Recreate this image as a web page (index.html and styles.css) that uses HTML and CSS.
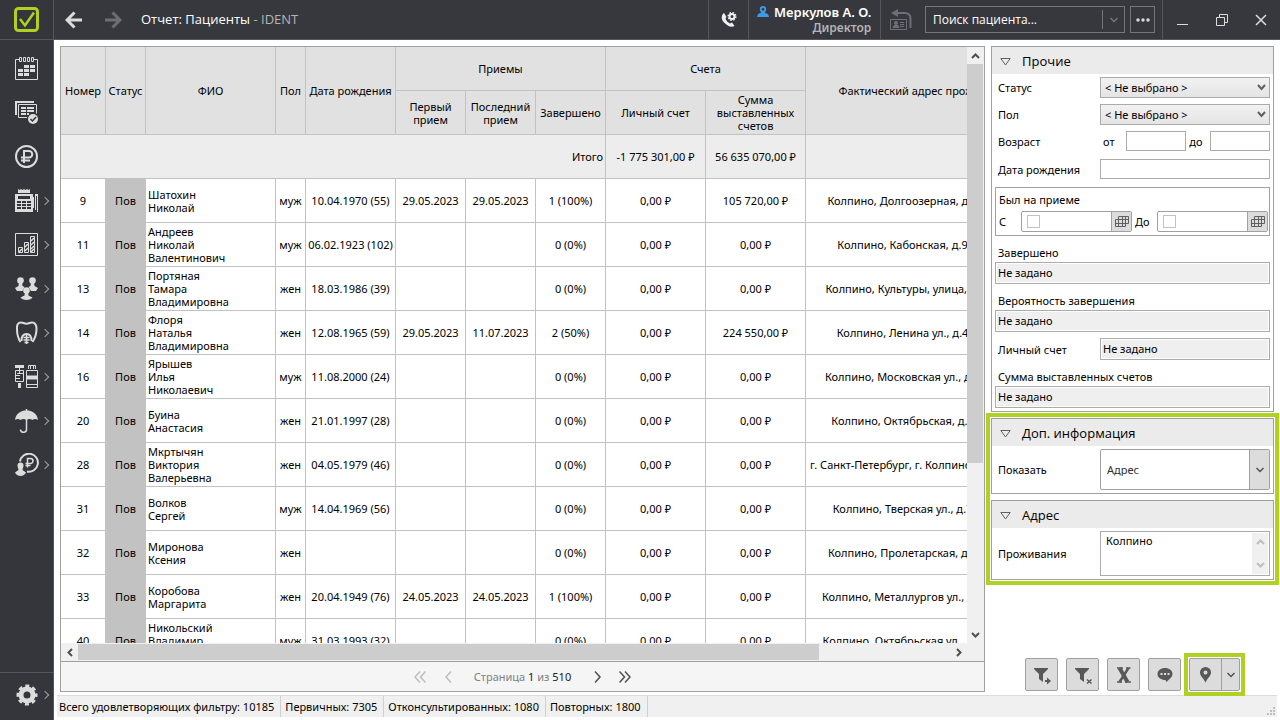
FILE: index.html
```
<!DOCTYPE html>
<html lang="ru">
<head>
    <meta charset="utf-8">
    <title>Отчет: Пациенты - IDENT</title>
    <link rel="stylesheet" href="styles.css">
</head>

<body>
    <div class="sidebar">
        <div class="logo">
            <svg width="26" height="26" viewBox="0 0 26 26" fill="none" stroke="#aed123"><rect x="1.5" y="1.5" width="22" height="22" rx="3" stroke-width="3"/><path d="M6 12l5 6.500L20 5.500" stroke-width="2.500"/></svg>
        </div>
        <nav class="menu">
            <button class="menu-item" aria-label="Расписание">
                <svg width="24" height="24" viewBox="0 0 24 24" fill="#dcdcdc"><path d="M4 2.500H.5V22.500h22V2.500H19" fill="none" stroke="#dcdcdc"/><path d="M4.500.5h2v4h-2zM8.500.5h2v4h-2zM12.500.5h2v4h-2zM16.500.5h2v4h-2z" fill="none" stroke="#dcdcdc"/><path d="M9 8h5v3H9zM15 8h5v3h-5zM3 12h5v3H3zM9 12h5v3H9zM15 12h5v3h-5zM3 16h5v3H3zM9 16h5v3H9z"/></svg>
            </button>
            <button class="menu-item" aria-label="Задачи">
                <svg width="24" height="24" viewBox="0 0 24 24" fill="none" stroke="#dcdcdc"><path d="M1 14V1h18" stroke-width="2"/><path d="M12 16.500H3.500v-13h18v9"/><path d="M6 7h5M12 7h7M6 10h5M12 10h7M6 13h5M12 13h2" stroke-width="2"/><circle cx="18" cy="18" r="5" fill="#dcdcdc" stroke="none"/><path d="M15.500 18l2 2 3.500-4" stroke="#34363b" stroke-width="1.500"/></svg>
            </button>
            <button class="menu-item" aria-label="Касса">
                <svg width="24" height="24" viewBox="0 0 24 24" fill="none" stroke="#dcdcdc" stroke-width="2"><circle cx="11.500" cy="11.500" r="10.500"/><path d="M9 18V6h5a3 3 0 0 1 0 6.500H6M6 15.500h9"/></svg>
            </button>
            <button class="menu-item" aria-label="Счета">
                <svg width="24" height="24" viewBox="0 0 24 24" fill="#dcdcdc"><path d="M3 0l1.500 1L6 0l1.500 1L9 0l1.500 1L12 0l1.500 1L15 0v4H3z"/><path fill-rule="evenodd" d="M0 5h18v18H0zM3 7v3h12V7zM2 12v2h4v-2zM7 12v2h4v-2zM12 12v2h4v-2zM2 15v2h4v-2zM7 15v2h4v-2zM12 15v2h4v-2zM2 18v2h4v-2zM7 18v2h4v-2zM12 18v2h4v-2z"/><path d="M18 8h1v11h-1zM20 5h3v18h-1V7h-1v14h-1z"/></svg>
                <span class="arrow"></span>
            </button>
            <button class="menu-item" aria-label="Отчеты">
                <svg width="24" height="24" viewBox="0 0 24 24" fill="none" stroke="#dcdcdc"><path d="M.5.500h22v22H.5zM3.500 14.500h4v5h-4zM9.500 9.500h4v10h-4zM15.500 3.500h4v16h-4z"/><path d="M4 19l3-3M10 14l3-3M10 18l3-3M16 8l3-3M16 12l3-3M16 16l3-3M16 19l3-3" stroke-width="1.500"/></svg>
                <span class="arrow"></span>
            </button>
            <button class="menu-item" aria-label="Персонал">
                <svg width="24" height="24" viewBox="0 0 24 24" fill="#dcdcdc"><circle cx="5.500" cy="3.500" r="3.300"/><circle cx="17.500" cy="3.500" r="3.300"/><circle cx="11.500" cy="13.500" r="3.300"/><path d="M4 5h3l.5 4 2 1-2 4H2L0 11l3.500-2zM16 5h3l.5 4 3.500 2-2 3h-5l-2.500-4 2-1zM10 15h3l.5 3.500 4 2c-1 1.500-3 2.500-6 2.500s-5-1-6-2.500l4-2z"/></svg>
                <span class="arrow"></span>
            </button>
            <button class="menu-item" aria-label="Лечение">
                <svg width="24" height="24" viewBox="0 0 24 24" fill="none" stroke="#dcdcdc"><path d="M5.500 21C3.500 18 2 12 2 8 1.500 4 3 1.500 6 1.500c2 0 3 1.200 5.500 1.200S15 1.500 17 1.500c3 0 4.500 2.500 4.500 6.500 0 4-2 10-4 13" stroke-width="2"/><path d="M6.500 20c0-5 2-7 5-7s5 2 5 7" stroke-width="2"/><path d="M11.500 13v10M8.500 16.500h6M8.500 19h6M9.500 21.500h4" stroke-width="1.500"/></svg>
                <span class="arrow"></span>
            </button>
            <button class="menu-item" aria-label="Склад">
                <svg width="24" height="24" viewBox="0 0 24 24" fill="none" stroke="#dcdcdc"><path d="M0 1.500h9" stroke-width="3"/><path d="M4.500 2v6M2 8.500h6M.5 5.500h8v11h-8zM1 10.500h4M1 13.500h4M11.500 5.500h11v17h-11zM11.500 19.500h11M13.500 4V.500h7V4M15.500 1v3M18.500 1v3"/><path d="M12 12.500h10" stroke-width="4"/><path d="M4.500 18v5" stroke-width="3"/></svg>
                <span class="arrow"></span>
            </button>
            <button class="menu-item" aria-label="Страхование">
                <svg width="24" height="24" viewBox="0 0 24 24" fill="none" stroke="#dcdcdc"><path d="M11.500 0v11V20a3 3 0 0 1-6 .5" stroke-width="1.500"/><path d="M0 11C1 4 6 1.500 11.500 1.500S22 4 23 11c-2-1.500-4-1.500-5.500 0-2-1.500-4-1.500-6 0-2-1.500-4-1.500-6 0-1.500-1.500-3.500-1.500-5.500 0z" fill="#dcdcdc" stroke="none"/></svg>
                <span class="arrow"></span>
            </button>
            <button class="menu-item" aria-label="Зарплата">
                <svg width="24" height="24" viewBox="0 0 24 24" fill="none" stroke="#dcdcdc"><path d="M5 8.500A9 9 0 1 1 12 18.500" stroke-width="2"/><path d="M12.500 14.500V5.500h3a2 2 0 0 1 0 5h-5M10.500 12.500h5" stroke-width="1.500"/><path d="M5.500 9.500a3 3 0 0 1 3 3c0 2-1 3-1 4.500L11 19.500c-1 2-3 3.500-5.500 3.500S1 21.500 0 19.500L3.500 17C3.500 15.500 2.500 14.500 2.500 12.500a3 3 0 0 1 3-3z" fill="#dcdcdc" stroke="none"/></svg>
                <span class="arrow"></span>
            </button>
        </nav>
        <button class="menu-item settings" aria-label="Настройки">
            <svg width="24" height="24" viewBox="0 0 24 24"><circle cx="12" cy="12" r="6" fill="none" stroke="#dcdcdc" stroke-width="5"/><circle cx="12" cy="12" r="9" fill="none" stroke="#dcdcdc" stroke-width="3" stroke-dasharray="3.900 3.170" stroke-dashoffset="1.950"/></svg>
            <span class="arrow"></span>
        </button>
    </div>

    <div class="main">
        <header class="topbar">
            <button class="nav-button" aria-label="Назад">
                <svg width="18" height="18" viewBox="0 0 18 18" fill="none" stroke="#dcdcdc" stroke-width="3"><path d="M17 9H2.500M9.500 1.500L2 9l7.500 7.500"/></svg>
            </button>
            <button class="nav-button" aria-label="Вперед">
                <svg width="18" height="18" viewBox="0 0 18 18" fill="none" stroke="#6c6f78" stroke-width="3"><path d="M1 9h14.500M8.500 1.500L16 9l-7.500 7.500"/></svg>
            </button>
            <h1 class="title">Отчет: Пациенты <span>- IDENT</span></h1>
            <button class="phone" aria-label="Телефония">
                <svg width="16" height="16" viewBox="0 0 16 16" fill="none" stroke="#f0f0f0"><path d="M3 1C0 3 0 7.500 3 10.500s7 5.500 10.500 3.500L11 10.500 9 11.500C7 10.500 5 8.500 4.500 6.500L5.500 5z" fill="#f0f0f0" stroke="none"/><circle cx="11" cy="4.500" r="2.500" stroke-width="2"/><circle cx="11" cy="4.500" r="3.800" stroke-width="1.500" stroke-dasharray="1.500 1.480"/></svg>
            </button>
            <div class="user">
                <svg width="12" height="12" viewBox="0 0 12 12" fill="#3f9ae5"><path d="M6 0a3.200 3.200 0 0 1 3.200 3.200C9.200 5 8 5.500 8 7l3 1 1 3H0l1-3 3-1c0-1.500-1.200-2-1.200-3.800A3.200 3.200 0 0 1 6 0z"/><circle cx="6" cy="3.200" r="1.300" fill="#36383e"/></svg>
                <div class="user-text">
                    <div class="user-name">Меркулов А. О.</div>
                    <div class="user-role">Директор</div>
                </div>
            </div>
            <div class="search">
                <button class="card-button" aria-label="Последний пациент">
                    <svg width="22" height="22" viewBox="0 0 22 22" fill="none" stroke="#6c6f78"><path d="M.5 10.500h16v10H.5zM10 13.500h4M10 15.500h4M10 17.500h4"/><path d="M3 18.500h6l-1-2H4z" fill="#6c6f78"/><circle cx="6" cy="14" r="1.500" fill="#6c6f78"/><path d="M6 4h9c4 0 5.500 2.500 5.500 6v9" stroke-width="2"/><path d="M8 0v8L1 4z" fill="#6c6f78" stroke="none"/></svg>
                </button>
                <div class="search-box">
                    <input type="text" placeholder="Поиск пациента..." aria-label="Поиск пациента">
                    <button class="search-drop" aria-label="История поиска">
                        <svg width="8" height="6" viewBox="0 0 8 6" fill="none" stroke="#73767e" stroke-width="1.500"><path d="M.5 1L4 4.500 7.500 1"/></svg>
                    </button>
                </div>
                <button class="dots" aria-label="Еще">
                    <svg width="14" height="4" viewBox="0 0 14 4" fill="#dcdcdc"><circle cx="2" cy="2" r="1.700"/><circle cx="7" cy="2" r="1.700"/><circle cx="12" cy="2" r="1.700"/></svg>
                </button>
            </div>
            <div class="window-buttons">
                <button aria-label="Свернуть">
                    <svg width="12" height="12" viewBox="0 0 12 12" stroke="#dcdcdc"><path d="M0 10.500h11"/></svg>
                </button>
                <button aria-label="Развернуть">
                    <svg width="12" height="12" viewBox="0 0 12 12" fill="none" stroke="#dcdcdc"><path d="M.5 3.500h8v8h-8zM3.500 3.500v-3h8v8h-3"/></svg>
                </button>
                <button aria-label="Закрыть">
                    <svg width="12" height="12" viewBox="0 0 12 12" stroke="#dcdcdc" stroke-width="1.500"><path d="M1 1l10 10M11 1L1 11"/></svg>
                </button>
            </div>
        </header>

        <div class="content">
            <div class="report">
                <div class="grid-area">
                    <div class="grid-view">
                        <table class="grid">
                            <colgroup>
                                <col class="w45"><col class="w40"><col class="w130"><col class="w30"><col class="w90">
                                <col class="w70"><col class="w70"><col class="w70"><col class="w100"><col class="w100"><col class="w240">
                            </colgroup>
                            <thead>
                                <tr>
                                    <th rowspan="2">Номер</th>
                                    <th rowspan="2">Статус</th>
                                    <th rowspan="2">ФИО</th>
                                    <th rowspan="2">Пол</th>
                                    <th rowspan="2">Дата рождения</th>
                                    <th colspan="3">Приемы</th>
                                    <th colspan="2">Счета</th>
                                    <th rowspan="2">Фактический адрес проживания</th>
                                </tr>
                                <tr>
                                    <th>Первый прием</th>
                                    <th>Последний прием</th>
                                    <th>Завершено</th>
                                    <th>Личный счет</th>
                                    <th>Сумма выставленных счетов</th>
                                </tr>
                            </thead>
                            <tbody>
                                <tr class="total">
                                    <td colspan="8" class="total-label">Итого</td>
                                    <td>-1 775 301,00 ₽</td>
                                    <td>56 635 070,00 ₽</td>
                                    <td></td>
                                </tr>
                                <tr><td>9</td><td class="status">Пов</td><td class="name">Шатохин<br>Николай</td><td>муж</td><td>10.04.1970 (55)</td><td>29.05.2023</td><td>29.05.2023</td><td>1 (100%)</td><td>0,00 ₽</td><td>105 720,00 ₽</td><td>Колпино, Долгоозерная, д.14, кв.112</td></tr>
                                <tr><td>11</td><td class="status">Пов</td><td class="name">Андреев<br>Николай<br>Валентинович</td><td>муж</td><td>06.02.1923 (102)</td><td></td><td></td><td>0 (0%)</td><td>0,00 ₽</td><td>0,00 ₽</td><td>Колпино, Кабонская, д.96, кв.112</td></tr>
                                <tr><td>13</td><td class="status">Пов</td><td class="name">Портяная<br>Тамара<br>Владимировна</td><td>жен</td><td>18.03.1986 (39)</td><td></td><td></td><td>0 (0%)</td><td>0,00 ₽</td><td>0,00 ₽</td><td>Колпино, Культуры, улица, д.12, кв.77</td></tr>
                                <tr><td>14</td><td class="status">Пов</td><td class="name">Флоря<br>Наталья<br>Владимировна</td><td>жен</td><td>12.08.1965 (59)</td><td>29.05.2023</td><td>11.07.2023</td><td>2 (50%)</td><td>0,00 ₽</td><td>224 550,00 ₽</td><td>Колпино, Ленина ул., д.45, кв.112</td></tr>
                                <tr><td>16</td><td class="status">Пов</td><td class="name">Ярышев<br>Илья<br>Николаевич</td><td>муж</td><td>11.08.2000 (24)</td><td></td><td></td><td>0 (0%)</td><td>0,00 ₽</td><td>0,00 ₽</td><td>Колпино, Московская ул., д.14, кв.112</td></tr>
                                <tr><td>20</td><td class="status">Пов</td><td class="name">Буина<br>Анастасия</td><td>жен</td><td>21.01.1997 (28)</td><td></td><td></td><td>0 (0%)</td><td>0,00 ₽</td><td>0,00 ₽</td><td>Колпино, Октябрьская, д.77, кв.112</td></tr>
                                <tr><td>28</td><td class="status">Пов</td><td class="name">Мкртычян<br>Виктория<br>Валерьевна</td><td>жен</td><td>04.05.1979 (46)</td><td></td><td></td><td>0 (0%)</td><td>0,00 ₽</td><td>0,00 ₽</td><td>г. Санкт-Петербург, г. Колпино, ул. Веры, 55</td></tr>
                                <tr><td>31</td><td class="status">Пов</td><td class="name">Волков<br>Сергей</td><td>муж</td><td>14.04.1969 (56)</td><td></td><td></td><td>0 (0%)</td><td>0,00 ₽</td><td>0,00 ₽</td><td>Колпино, Тверская ул., д.72, кв.112</td></tr>
                                <tr><td>32</td><td class="status">Пов</td><td class="name">Миронова<br>Ксения</td><td>жен</td><td></td><td></td><td></td><td>0 (0%)</td><td>0,00 ₽</td><td>0,00 ₽</td><td>Колпино, Пролетарская, д.14, кв.112</td></tr>
                                <tr><td>33</td><td class="status">Пов</td><td class="name">Коробова<br>Маргарита</td><td>жен</td><td>20.04.1949 (76)</td><td>24.05.2023</td><td>24.05.2023</td><td>1 (100%)</td><td>0,00 ₽</td><td>0,00 ₽</td><td>Колпино, Металлургов ул., д.14, кв.112</td></tr>
                                <tr><td>40</td><td class="status">Пов</td><td class="name">Никольский<br>Владимир<br>Иванович</td><td>муж</td><td>31.03.1993 (32)</td><td></td><td></td><td>0 (0%)</td><td>0,00 ₽</td><td>0,00 ₽</td><td>Колпино, Октябрьская ул., д.14, кв.112</td></tr>
                            </tbody>
                        </table>
                    </div>
                    <div class="vscroll">
                        <div class="scroll-arrow"><svg width="9" height="6" viewBox="0 0 9 6" fill="none" stroke="#505050" stroke-width="2"><path d="M1 5l3.500-3.500L8 5"/></svg></div>
                        <div class="track"><div class="thumb"></div></div>
                        <div class="scroll-arrow"><svg width="9" height="6" viewBox="0 0 9 6" fill="none" stroke="#505050" stroke-width="2"><path d="M1 1l3.500 3.500L8 1"/></svg></div>
                    </div>
                </div>
                <div class="hscroll">
                    <div class="scroll-arrow"><svg width="6" height="9" viewBox="0 0 6 9" fill="none" stroke="#505050" stroke-width="2"><path d="M5 1L1.500 4.500 5 8"/></svg></div>
                    <div class="track"><div class="thumb"></div></div>
                    <div class="scroll-arrow"><svg width="6" height="9" viewBox="0 0 6 9" fill="none" stroke="#505050" stroke-width="2"><path d="M1 1l3.500 3.500L1 8"/></svg></div>
                </div>
                <div class="pager">
                    <button disabled aria-label="Первая"><svg width="12" height="12" viewBox="0 0 12 12" fill="none" stroke="#bdbdbd" stroke-width="1.500"><path d="M6 .500L1 6l5 5.500M11.500.500l-5 5.500 5 5.500"/></svg></button>
                    <button disabled aria-label="Предыдущая"><svg width="12" height="12" viewBox="0 0 12 12" fill="none" stroke="#bdbdbd" stroke-width="1.500"><path d="M9 .500L4 6l5 5.500"/></svg></button>
                    <div class="page-text">Страница <b>1</b> из <b>510</b></div>
                    <button aria-label="Следующая"><svg width="12" height="12" viewBox="0 0 12 12" fill="none" stroke="#505050" stroke-width="1.500"><path d="M4 .500L9 6l-5 5.500"/></svg></button>
                    <button aria-label="Последняя"><svg width="12" height="12" viewBox="0 0 12 12" fill="none" stroke="#505050" stroke-width="1.500"><path d="M.5.500l5 5.500-5 5.500M6 .500L11 6l-5 5.500"/></svg></button>
                </div>
            </div>

            <aside class="filters">
                <section class="panel">
                    <h2 class="panel-head"><svg width="11" height="8" viewBox="0 0 11 8" fill="none" stroke="#606060"><path d="M.8.500h9.400L5.500 7z"/></svg>Прочие</h2>
                    <div class="rows">
                        <div class="row">
                            <label for="status">Статус</label>
                            <div class="select">
                                <select id="status"><option>&lt; Не выбрано &gt;</option></select>
                                <svg width="9" height="7" viewBox="0 0 9 7" fill="none" stroke="#606060" stroke-width="2"><path d="M1 1l3.500 4L8 1"/></svg>
                            </div>
                        </div>
                        <div class="row">
                            <label for="sex">Пол</label>
                            <div class="select">
                                <select id="sex"><option>&lt; Не выбрано &gt;</option></select>
                                <svg width="9" height="7" viewBox="0 0 9 7" fill="none" stroke="#606060" stroke-width="2"><path d="M1 1l3.500 4L8 1"/></svg>
                            </div>
                        </div>
                        <div class="row">
                            <span>Возраст</span>
                            <div class="range">
                                <label for="age_from">от</label><input type="text" id="age_from">
                                <label for="age_to">до</label><input type="text" id="age_to">
                            </div>
                        </div>
                        <div class="row birth">
                            <label for="birth">Дата рождения</label>
                            <input type="text" id="birth">
                        </div>
                        <div class="visit">
                            <div>Был на приеме</div>
                            <div class="dates">
                                <span class="from">С</span>
                                <div class="date">
                                    <input type="checkbox" aria-label="С даты">
                                    <button aria-label="Календарь"><svg width="14" height="11" viewBox="0 0 14 11" fill="none" stroke="#606060"><path d="M3.500.500h10v7H.5M.5 3.500h13M.5 3.500v7h10v-10M3.500.500v10M7.500.500v10"/></svg></button>
                                </div>
                                <span class="to">До</span>
                                <div class="date">
                                    <input type="checkbox" aria-label="До даты">
                                    <button aria-label="Календарь"><svg width="14" height="11" viewBox="0 0 14 11" fill="none" stroke="#606060"><path d="M3.500.500h10v7H.5M.5 3.500h13M.5 3.500v7h10v-10M3.500.500v10M7.500.500v10"/></svg></button>
                                </div>
                            </div>
                        </div>
                        <div class="field">
                            <label for="done">Завершено</label>
                            <input type="text" class="unset" id="done" value="Не задано" readonly>
                        </div>
                        <div class="field">
                            <label for="chance">Вероятность завершения</label>
                            <input type="text" class="unset" id="chance" value="Не задано" readonly>
                        </div>
                        <div class="row account">
                            <label for="account">Личный счет</label>
                            <input type="text" class="unset" id="account" value="Не задано" readonly>
                        </div>
                        <div class="field">
                            <label for="bills">Сумма выставленных счетов</label>
                            <input type="text" class="unset" id="bills" value="Не задано" readonly>
                        </div>
                    </div>
                </section>

                <div class="marked">
                    <section class="panel">
                        <h2 class="panel-head"><svg width="11" height="8" viewBox="0 0 11 8" fill="none" stroke="#606060"><path d="M.8.500h9.400L5.500 7z"/></svg>Доп. информация</h2>
                        <div class="rows">
                            <div class="row">
                                <label for="show">Показать</label>
                                <div class="combo">
                                    <select id="show"><option>Адрес</option></select>
                                    <div class="combo-arrow"><svg width="8" height="6" viewBox="0 0 8 6" fill="none" stroke="#505050" stroke-width="1.500"><path d="M.5 1L4 4.500 7.500 1"/></svg></div>
                                </div>
                            </div>
                        </div>
                    </section>
                    <section class="panel">
                        <h2 class="panel-head"><svg width="11" height="8" viewBox="0 0 11 8" fill="none" stroke="#606060"><path d="M.8.500h9.400L5.500 7z"/></svg>Адрес</h2>
                        <div class="rows">
                            <div class="row">
                                <label for="address">Проживания</label>
                                <div class="memo">
                                    <textarea id="address">Колпино</textarea>
                                    <div class="memo-scroll">
                                        <svg width="9" height="6" viewBox="0 0 9 6" fill="none" stroke="#bfbfbf" stroke-width="2"><path d="M1 5l3.500-3.500L8 5"/></svg>
                                        <svg width="9" height="6" viewBox="0 0 9 6" fill="none" stroke="#bfbfbf" stroke-width="2"><path d="M1 1l3.500 3.500L8 1"/></svg>
                                    </div>
                                </div>
                            </div>
                        </div>
                    </section>
                </div>

                <div class="actions">
                    <button class="action" aria-label="Применить фильтр"><svg width="20" height="20" viewBox="0 0 20 20" fill="#585858"><path d="M2 3h14v1l-5 5v8l-4-3V9L2 4z"/><path d="M13 15h2v-2.500l4 3.500-4 3.500V17h-2z"/></svg></button>
                    <button class="action" aria-label="Сбросить фильтр"><svg width="20" height="20" viewBox="0 0 20 20" fill="#585858"><path d="M2 3h14v1l-5 5v8l-4-3V9L2 4z"/><path d="M14 14.500l4.500 4M18.500 14.500l-4.500 4" stroke="#585858" stroke-width="1.500"/></svg></button>
                    <button class="action" aria-label="Экспорт в Excel"><svg width="16" height="16" viewBox="0 0 16 16" fill="none" stroke="#585858"><path d="M3.500 1l8 14" stroke-width="4"/><path d="M12.500 1L3.500 15" stroke-width="2.500"/><path d="M1 1h6M10 1h4.500M1 15h5M9 15h6" stroke-width="1.500"/></svg></button>
                    <button class="action" aria-label="Отправить SMS"><svg width="16" height="16" viewBox="0 0 16 16"><path d="M8 1c4.200 0 7.500 2.500 7.500 6 0 2.500-2 4.500-3.500 5.500L9.500 15 8.500 13C4 13 .5 10.500.5 7S3.800 1 8 1z" fill="#585858"/><path d="M3.500 6h2v2h-2zM7 6h2v2H7zM10.500 6h2v2h-2z" fill="#dcdcdc"/></svg></button>
                    <div class="split-mark">
                        <div class="split">
                            <button class="split-main" aria-label="Показать на карте"><svg width="11" height="16" viewBox="0 0 11 16"><path fill="#585858" fill-rule="evenodd" d="M5.500 0A5.500 5.500 0 0 1 11 5.500C11 9 7.500 11 5.500 15.500 3.500 11 0 9 0 5.500A5.500 5.500 0 0 1 5.500 0zm0 3.500a2 2 0 1 0 0 4 2 2 0 0 0 0-4z"/></svg></button>
                            <button class="split-drop" aria-label="Варианты карты"><svg width="8" height="6" viewBox="0 0 8 6" fill="none" stroke="#505050" stroke-width="1.500"><path d="M.5 1L4 4.500 7.500 1"/></svg></button>
                        </div>
                    </div>
                </div>
            </aside>
        </div>

        <footer class="statusbar">
            <div>Всего удовлетворяющих фильтру: 10185</div>
            <div>Первичных: 7305</div>
            <div>Отконсультированных: 1080</div>
            <div>Повторных: 1800</div>
            <svg class="grip" width="8" height="8" viewBox="0 0 8 8" fill="#bfbfbf"><path d="M6 0h2v2H6zM3 3h2v2H3zM6 3h2v2H6zM0 6h2v2H0zM3 6h2v2H3zM6 6h2v2H6z"/></svg>
        </footer>
    </div>
</body>
</html>
```

FILE: styles.css
```
* {
    box-sizing: border-box;
}

body {
    margin: 0;
    display: flex;
    height: 100vh;
    overflow: hidden;
    background-color: #fff;
    color: #000;
    font-family: "Noto Sans", sans-serif;
    font-size: 11px;
    line-height: 13px;
}

button, input, select, textarea {
    margin: 0;
    padding: 0;
    border: none;
    border-radius: 0;
    background: none;
    color: inherit;
    font: inherit;
    outline: none;
}

button {
    display: flex;
    justify-content: center;
    align-items: center;
    cursor: pointer;
}

svg {
    display: block;
    flex: none;
}

h1, h2 {
    margin: 0;
    font-weight: normal;
}

/* left menu */

.sidebar {
    display: flex;
    flex-direction: column;
    flex: none;
    width: 54px;
    background-color: #34363b;
    border-right: 1px solid #55575d;
}

.logo {
    display: flex;
    justify-content: center;
    align-items: center;
    height: 40px;
    border-bottom: 1px solid #55575d;
}

.menu {
    flex: 1;
    padding-top: 7px;
}

.menu-item {
    position: relative;
    width: 53px;
    height: 44px;
}

.arrow {
    position: absolute;
    right: 5px;
    top: 19px;
    width: 6px;
    height: 6px;
    border-top: 1px solid #a0a0a0;
    border-right: 1px solid #a0a0a0;
    transform: rotate(45deg);
}

.settings {
    height: 48px;
    padding-bottom: 4px;
    border-top: 1px solid #55575d;
}

/* top bar */

.main {
    display: flex;
    flex-direction: column;
    flex: 1;
    min-width: 0;
}

.topbar {
    display: flex;
    flex: none;
    height: 40px;
    background-color: #36383e;
    border-bottom: 1px solid #55575d;
    color: #fff;
}

.nav-button {
    width: 39px;
}

.title {
    flex: 1;
    padding-left: 9px;
    font-family: "Open Sans", sans-serif;
    font-size: 13px;
    line-height: 39px;
}

.title span {
    color: #b4b4b4;
}

.phone {
    width: 41px;
    border-left: 1px solid #55575d;
    border-right: 1px solid #55575d;
}

.user {
    display: flex;
    gap: 5px;
    width: 132px;
    padding: 4px 9px 0 8px;
    border-right: 1px solid #55575d;
}

.user svg {
    margin-top: 2px;
}

.user-text {
    flex: 1;
    text-align: right;
    font-weight: 600;
    line-height: 16px;
    white-space: nowrap;
}

.user-name {
    font-size: 13px;
}

.user-role {
    color: #b4b4b4;
    font-size: 12px;
}

.search {
    display: flex;
    align-items: center;
    width: 282px;
    border-right: 1px solid #55575d;
}

.card-button {
    width: 39px;
    margin-right: 5px;
}

.search-box {
    display: flex;
    align-items: center;
    width: 200px;
    height: 27px;
    margin-right: 5px;
    border: 1px solid #74767b;
}

.search-box input {
    flex: 1;
    min-width: 0;
    padding-left: 7px;
    font-family: "Open Sans", sans-serif;
    font-size: 12px;
}

.search-box input::placeholder {
    color: #fff;
}

.search-drop {
    width: 22px;
    height: 19px;
    border-left: 1px solid #74767b;
}

.dots {
    width: 25px;
    height: 27px;
    border: 1px solid #74767b;
}

.window-buttons {
    display: flex;
}

.window-buttons button {
    width: 39px;
}

/* report */

.content {
    display: flex;
    flex: 1;
    min-height: 0;
    padding: 6px 6px 3px;
    gap: 6px;
}

.report {
    display: flex;
    flex-direction: column;
    flex: 1;
    min-width: 0;
    border: 1px solid #a0a0a0;
}

.grid-area {
    display: flex;
    flex: 1;
    min-height: 0;
}

.grid-view {
    flex: 1;
    min-width: 0;
    overflow: hidden;
}

.grid {
    width: 985px;
    table-layout: fixed;
    border-collapse: separate;
    border-spacing: 0;
}

.w30 { width: 30px; }
.w40 { width: 40px; }
.w45 { width: 45px; }
.w70 { width: 70px; }
.w90 { width: 90px; }
.w100 { width: 100px; }
.w130 { width: 130px; }
.w240 { width: 240px; }

.grid th, .grid td {
    height: 44px;
    padding: 0;
    border-right: 1px solid #c2c2c2;
    border-bottom: 1px solid #c2c2c2;
    text-align: center;
    font-weight: normal;
}

.grid td {
    white-space: nowrap;
}

.grid th {
    background-color: #e1e1e1;
}

.grid .total td {
    background-color: #ededed;
}

.grid .total-label {
    padding-right: 2px;
    text-align: right;
}

.grid .status {
    background-color: #c2c2c2;
}

.grid .name {
    padding-left: 2px;
    text-align: left;
}

.vscroll {
    display: flex;
    flex-direction: column;
    width: 17px;
    padding-right: 1px;
    background-color: #f0f0f0;
}

.hscroll {
    display: flex;
    height: 18px;
    padding: 1px 17px 1px 0;
    background-color: #f0f0f0;
}

.scroll-arrow {
    display: flex;
    justify-content: center;
    align-items: center;
    width: 17px;
    height: 17px;
}

.vscroll .scroll-arrow {
    width: 16px;
}

.hscroll .scroll-arrow {
    height: 16px;
}

.track {
    flex: 1;
}

.thumb {
    background-color: #cdcdcd;
}

.vscroll .thumb {
    height: 71%;
}

.hscroll .thumb {
    width: 85%;
    height: 16px;
}

.pager {
    display: flex;
    justify-content: center;
    height: 30px;
    background-color: #f5f5f5;
    border-top: 1px solid #a0a0a0;
}

.pager button {
    width: 28px;
}

.page-text {
    padding: 0 12px;
    color: #808080;
    line-height: 29px;
}

.page-text b {
    color: #202020;
    font-weight: normal;
}

/* filters */

.filters {
    display: flex;
    flex-direction: column;
    flex: none;
    width: 283px;
}

.panel {
    border: 1px solid #a0a0a0;
}

.panel-head {
    display: flex;
    align-items: center;
    gap: 11px;
    height: 27px;
    padding: 2px 0 0 8px;
    background-color: #ebebeb;
    font-family: "Open Sans", sans-serif;
    font-size: 13px;
    line-height: 25px;
}

.rows {
    padding: 3px;
}

.row {
    display: flex;
    align-items: center;
    padding-left: 3px;
    margin-bottom: 6px;
}

.rows > .row:last-child {
    margin-bottom: 0;
}

.row > :first-child {
    width: 102px;
}

.row > :last-child {
    flex: 1;
    min-width: 0;
}

.rows input[type="text"] {
    height: 20px;
    border: 1px solid #ababab;
}

.select {
    position: relative;
}

.select select {
    width: 100%;
    height: 21px;
    padding-left: 4px;
    border: 1px solid #ababab;
    background: linear-gradient(#f2f2f2, #e4e4e4);
    appearance: none;
}

.select svg {
    position: absolute;
    right: 4px;
    top: 7px;
}

.range {
    display: flex;
    align-items: center;
    justify-content: space-between;
    padding-left: 3px;
}

.range label {
    white-space: nowrap;
}

.range input {
    width: 60px;
}

.range label + input + label {
    margin: 0 -4px 0 -8px;
}

.birth {
    margin-top: 8px;
}

.visit {
    margin-top: 8px;
    padding: 5px 1px 3px 3px;
    border: 1px solid #a0a0a0;
}

.dates {
    display: flex;
    align-items: center;
    margin-top: 5px;
}

.from {
    width: 22px;
}

.to {
    padding: 0 3px;
    width: 25px;
}

.date {
    display: flex;
    flex: 1;
    align-items: center;
    justify-content: space-between;
    height: 21px;
    border: 1px solid #a0a0a0;
    border-radius: 2px;
}

.date input {
    width: 13px;
    height: 13px;
    margin-left: 5px;
    border: 1px solid #c2c2c2;
    appearance: none;
}

.date button {
    width: 20px;
    height: 19px;
    background-color: #dcdcdc;
    border-left: 1px solid #a0a0a0;
}

.field {
    display: flex;
    flex-direction: column;
    gap: 3px;
    margin-top: 10px;
}

.field label {
    padding-left: 3px;
}

.rows input.unset[type="text"] {
    height: 22px;
    padding: 0 2px 2px;
    background-color: #efefef;
    box-shadow: inset 0 0 0 1px #fff;
}

.account {
    margin: 6px 0 10px;
}

.marked {
    display: flex;
    flex-direction: column;
    gap: 6px;
    margin: 1px -5px 0;
    padding: 1px;
    border: 4px solid #aed123;
}

.combo {
    position: relative;
}

.combo select {
    width: 100%;
    height: 41px;
    padding-left: 6px;
    border: 1px solid #a0a0a0;
    border-radius: 2px;
    color: #303030;
    appearance: none;
}

.combo-arrow {
    position: absolute;
    top: 1px;
    right: 1px;
    bottom: 1px;
    display: flex;
    justify-content: center;
    align-items: center;
    width: 20px;
    background-color: #dcdcdc;
    border-left: 1px solid #a0a0a0;
    pointer-events: none;
}

.memo {
    display: flex;
    height: 45px;
    padding: 1px;
    border: 1px solid #ababab;
}

.memo textarea {
    flex: 1;
    min-width: 0;
    padding: 1px 4px;
    resize: none;
}

.memo-scroll {
    display: flex;
    flex-direction: column;
    justify-content: space-between;
    align-items: center;
    width: 16px;
    padding: 6px 0;
    background-color: #f0f0f0;
}

.actions {
    display: flex;
    align-items: center;
    justify-content: flex-end;
    gap: 8px;
    margin: auto 29px -4px 0;
}

.action {
    width: 33px;
    height: 33px;
    background-color: #dcdcdc;
    border: 1px solid #a0a0a0;
    border-radius: 2px;
}

.split-mark {
    position: relative;
    margin-left: -5px;
    padding: 1px;
    border: 4px solid #aed123;
}

.split {
    display: flex;
    width: 51px;
    height: 33px;
    background-color: #dcdcdc;
    border: 1px solid #a0a0a0;
    border-radius: 2px;
}

.split-main {
    flex: 1;
    border-right: 1px solid #a0a0a0;
}

.split-drop {
    width: 17px;
}

/* bottom line */

.statusbar {
    display: flex;
    flex: none;
    height: 22px;
    margin: 0 3px 3px;
    background-color: #f0f0f0;
    border-top: 1px solid #dcdcdc;
    line-height: 22px;
}

.statusbar div {
    padding: 0 6px 0 4px;
    border-right: 1px solid #d0d0d0;
    white-space: nowrap;
}

.statusbar div:first-child {
    padding-left: 2px;
}

.grip {
    align-self: flex-end;
    margin: 0 2px 2px auto;
}
```
